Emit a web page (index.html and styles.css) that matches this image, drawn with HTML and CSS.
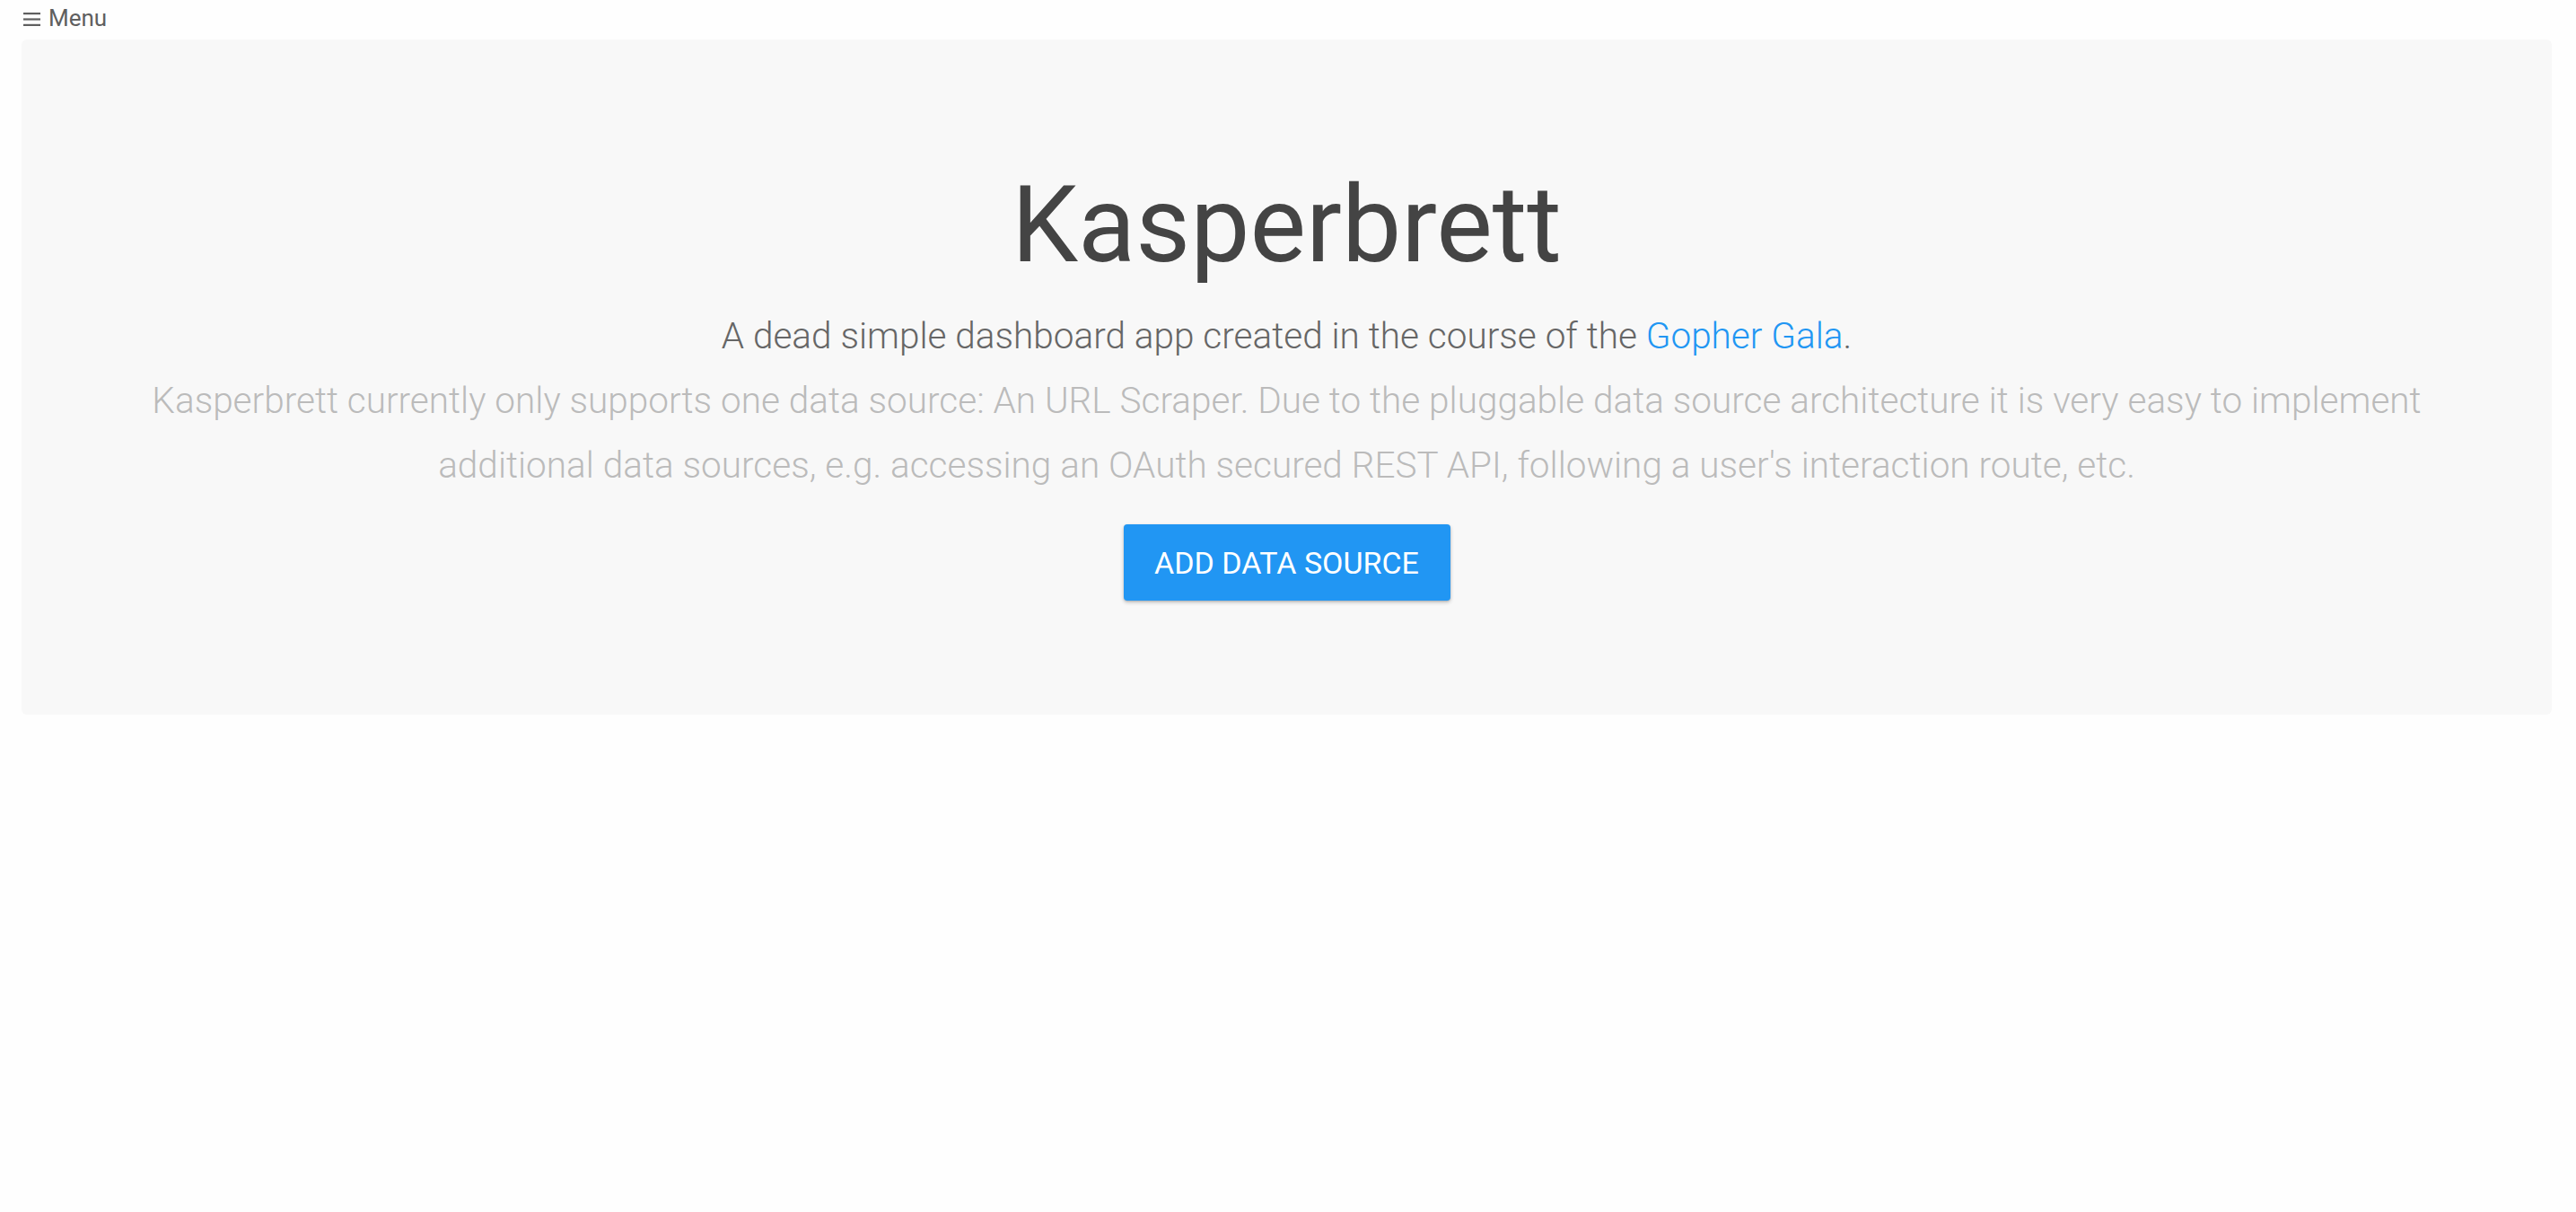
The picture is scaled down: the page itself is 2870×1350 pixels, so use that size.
FILE: index.html
```html
<!DOCTYPE html>
<html lang="en">
<head>
<meta charset="utf-8">
<title>Kasperbrett</title>
<link rel="stylesheet" href="styles.css">
</head>
<body>
<div class="page">
  <nav class="menu">
    <svg class="menu-icon" width="19" height="16" viewBox="0 0 19 16" aria-hidden="true">
      <rect x="0" y="1" width="19" height="2.2" fill="#5f5f5f"/>
      <rect x="0" y="7.4" width="19" height="2.2" fill="#5f5f5f"/>
      <rect x="0" y="13.8" width="19" height="2.2" fill="#5f5f5f"/>
    </svg>
    <span class="menu-label">Menu</span>
  </nav>
  <section class="jumbotron">
    <h1 class="title">Kasperbrett</h1>
    <p class="lead">A dead simple dashboard app created in the course of the <a href="#" class="link">Gopher Gala</a>.</p>
    <p class="note">Kasperbrett currently only supports one data source: An URL Scraper. Due to the pluggable data source architecture it is very easy to implement additional data sources, e.g. accessing an OAuth secured REST API, following a user's interaction route, etc.</p>
    <button class="btn">ADD DATA SOURCE</button>
  </section>
</div>
</body>
</html>
```

FILE: styles.css
```css
html, body {
  margin: 0;
  padding: 0;
  background: #fefefe;
}
body {
  font-family: Roboto, "Liberation Sans", sans-serif;
  color: #444;
}
.page {
  padding: 0 27px 0 24px;
}
.menu {
  display: flex;
  align-items: center;
  gap: 9px;
  height: 35px;
  padding-top: 5px;
  padding-left: 2px;
  box-sizing: border-box;
  color: #5f5f5f;
}
.menu-icon {
  display: block;
  margin-top: 2px;
}
.menu-label {
  font-size: 26px;
  line-height: 28px;
}
.jumbotron {
  margin-top: 9px;
  background: #f8f8f8;
  border-radius: 6px;
  padding: 142px 120px 127px;
  display: flex;
  flex-direction: column;
  align-items: center;
  text-align: center;
}
.title {
  margin: 0;
  font-size: 118px;
  line-height: 130px;
  font-weight: 400;
  color: #444;
}
.lead {
  margin: 31px 0 0;
  font-size: 40.5px;
  line-height: 55px;
  font-weight: 300;
  color: #666;
}
.link {
  color: #2196f3;
  text-decoration: none;
}
.note {
  margin: 8px 0 0;
  font-size: 40.5px;
  line-height: 72px;
  font-weight: 300;
  color: #bbb;
}
.btn {
  margin-top: 30px;
  width: 364px;
  height: 85px;
  border: 0;
  border-radius: 4px;
  background: #2196f3;
  color: #fff;
  font-family: Roboto, "Liberation Sans", sans-serif;
  font-size: 34px;
  font-weight: 400;
  box-shadow: 0 2px 4px rgba(0,0,0,0.22), 0 1px 2px rgba(0,0,0,0.12);
  cursor: pointer;
}
```
